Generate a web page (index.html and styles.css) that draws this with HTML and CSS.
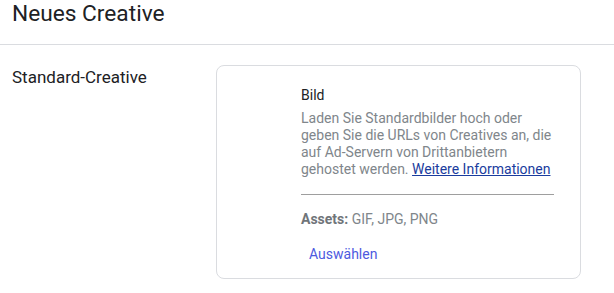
FILE: index.html
```html
<!DOCTYPE html>
<html>

<head>
    <meta charset='utf-8'>
    <title>Neues Creative</title>
    <meta name='viewport' content='width=device-width, initial-scale=1'>
    <link rel="stylesheet" href="styles.css">
</head>

<body>
    <header class="page-header">
        <h1>Neues Creative</h1>
    </header>

    <section class="row">
        <div class="row-label">Standard-Creative</div>

        <div class="card">
            <div class="card-title">Bild</div>
            <p class="card-desc">
                Laden Sie Standardbilder hoch oder geben Sie die URLs von Creatives an, die auf Ad-Servern von
                Drittanbietern gehostet werden. <a href="#">Weitere Informationen</a>
            </p>
            <hr class="card-divider">
            <div class="assets"><b>Assets:</b> GIF, JPG, PNG</div>
            <button class="select-btn">Auswählen</button>
        </div>
    </section>
</body>

</html>
```

FILE: styles.css
```css
* {
    box-sizing: border-box;
}

html,
body {
    margin: 0;
    padding: 0;
    background-color: #fff;
    font-family: Roboto, "Liberation Sans", sans-serif;
    color: #202124;
}

.page-header {
    padding: 0 12px 16px;
    border-bottom: 1px solid #dadce0;
}

.page-header h1 {
    margin: 0;
    font-size: 22.7px;
    font-weight: 400;
    line-height: 28px;
}

.row {
    display: flex;
    flex-direction: row;
    align-items: flex-start;
    padding: 20px 12px;
}

.row-label {
    flex: 0 0 204px;
    font-size: 17px;
    line-height: 24px;
}

.card {
    width: 365px;
    padding: 19px 26px 6px 84px;
    border: 1px solid #dadce0;
    border-radius: 8px;
    font-size: 14px;
    line-height: 20px;
}

.card-title {
    color: #202124;
}

.card-desc {
    margin: 5px 0 0;
    line-height: 17px;
    color: #80868b;
}

.card-desc a {
    color: #1a3c9e;
    text-decoration: underline;
}

.card-divider {
    margin: 16px 0 14px;
    border: 0;
    border-top: 1px solid #9e9e9e;
}

.assets {
    color: #80868b;
}

.assets b {
    color: #70757a;
    font-weight: 700;
}

.select-btn {
    margin-top: 7px;
    padding: 8px;
    border: 0;
    background: none;
    font-family: inherit;
    font-size: 14px;
    line-height: 20px;
    color: #4d5ae0;
    cursor: pointer;
}
```
